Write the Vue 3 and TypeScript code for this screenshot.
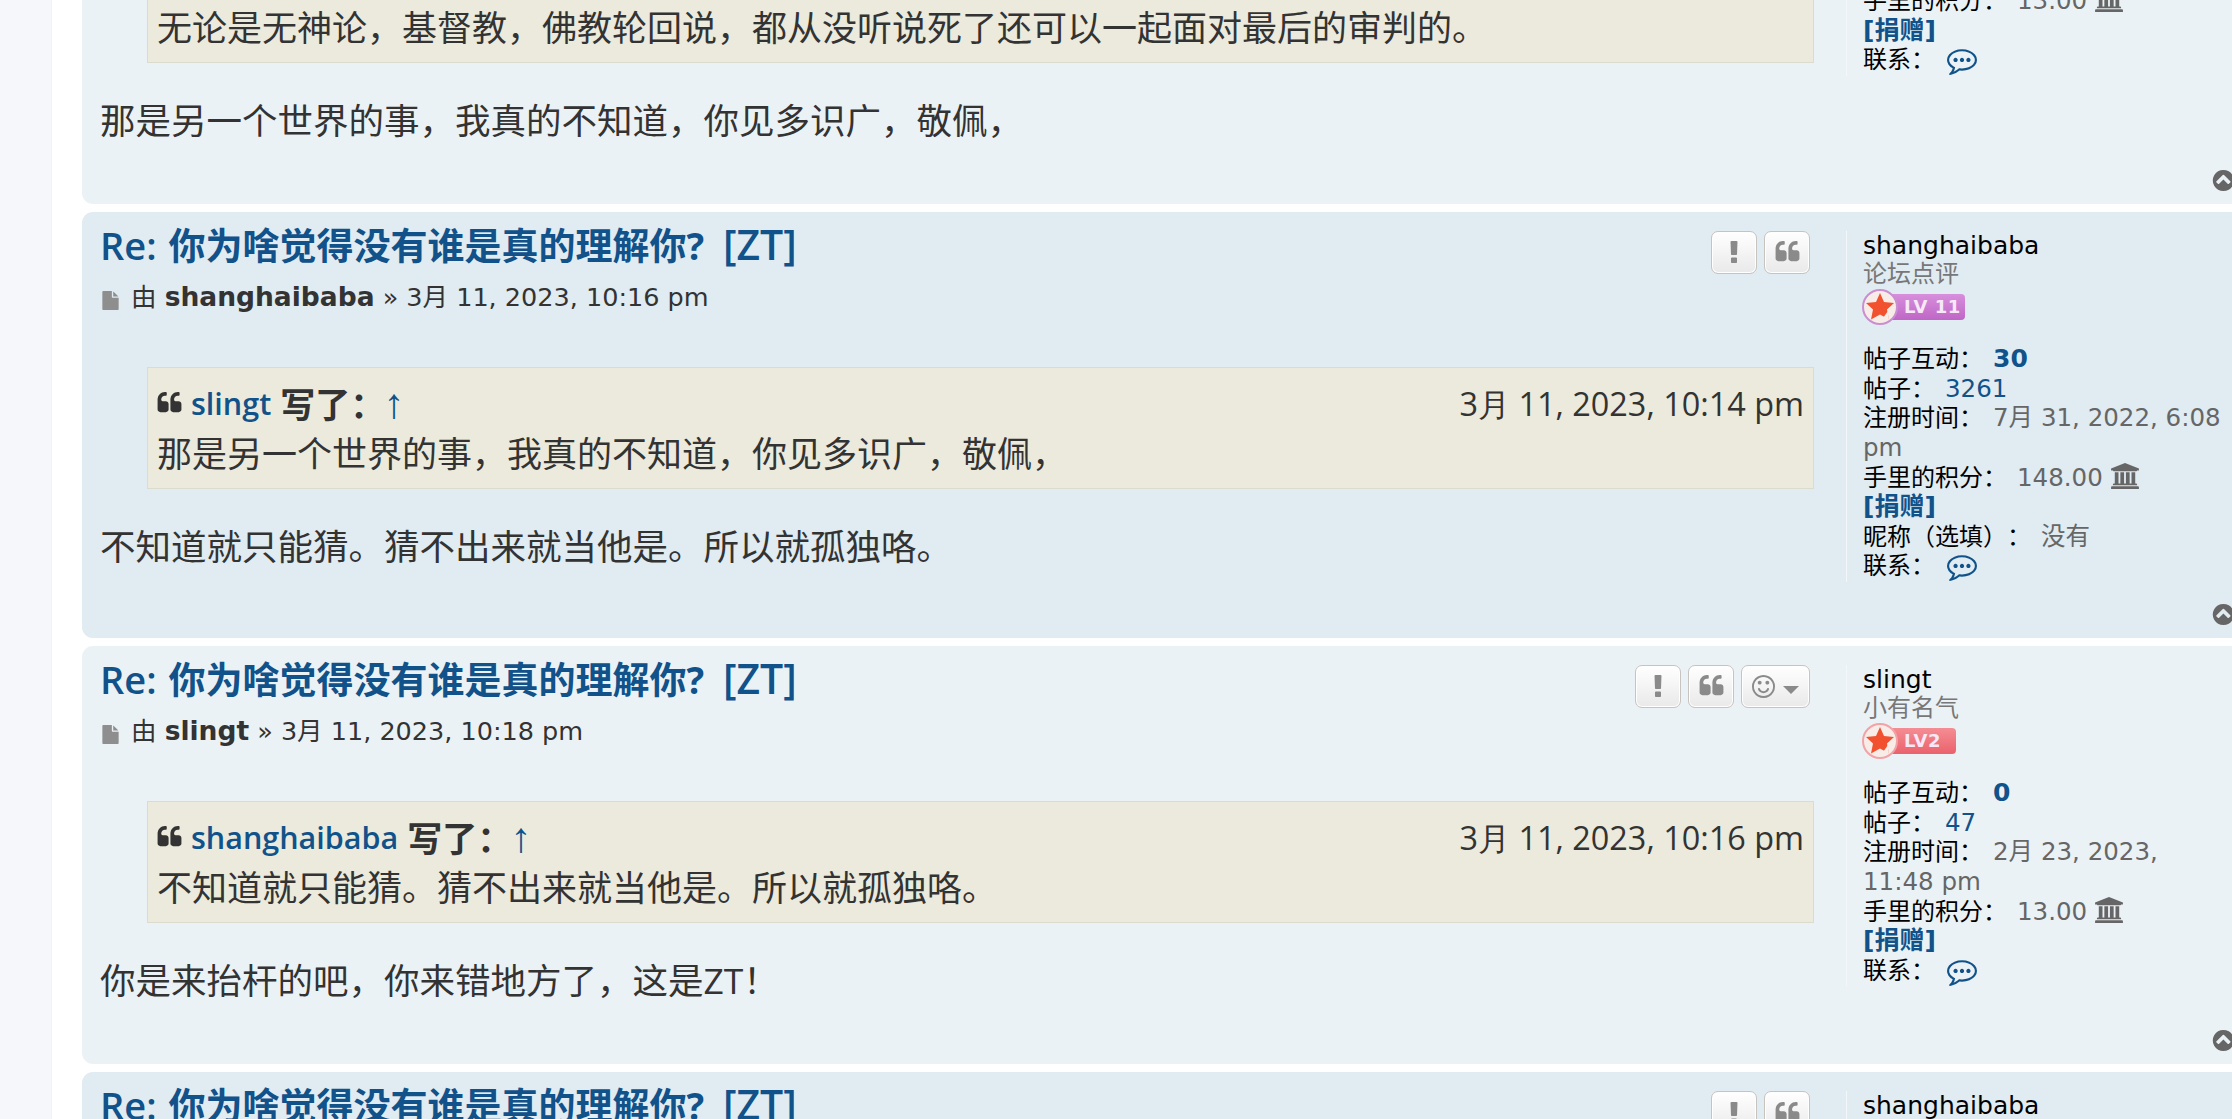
<script setup lang="ts">
interface Post {
  tone: string
  author: string
  time: string
  quoteAuthor: string
  quoteTime: string
  quoteLines: string[]
  text: string
  react: boolean
  rank: string
  level: string
  levelWidth: number
  levelColor: string
  levelLight: string
  ringColor: string
  reputation: string
  posts: string
  joined: string
  points: string
  nickname: boolean
}

const slingt = {
  author: 'slingt',
  rank: '小有名气',
  level: 'LV2',
  levelWidth: 94,
  levelColor: '#ea626c',
  levelLight: '#f58d94',
  ringColor: '#f3a3a6',
  reputation: '0',
  posts: '47',
  joined: '2月 23, 2023, 11:48 pm',
  points: '13.00',
  nickname: false,
}
const baba = {
  author: 'shanghaibaba',
  rank: '论坛点评',
  level: 'LV 11',
  levelWidth: 103,
  levelColor: '#bf66c6',
  levelLight: '#d78fdc',
  ringColor: '#c98fd0',
  reputation: '30',
  posts: '3261',
  joined: '7月 31, 2022, 6:08 pm',
  points: '148.00',
  nickname: true,
}

const title = '你为啥觉得没有谁是真的理解你?'

const posts: Post[] = [
  {
    ...slingt,
    tone: 'light',
    time: '3月 11, 2023, 10:14 pm',
    quoteAuthor: 'shanghaibaba',
    quoteTime: '3月 11, 2023, 10:12 pm',
    quoteLines: ['我们都不可能一起面对最后的审判。', '无论是无神论，基督教，佛教轮回说，都从没听说死了还可以一起面对最后的审判的。'],
    text: '那是另一个世界的事，我真的不知道，你见多识广，敬佩，',
    react: true,
  },
  {
    ...baba,
    tone: 'dark',
    time: '3月 11, 2023, 10:16 pm',
    quoteAuthor: 'slingt',
    quoteTime: '3月 11, 2023, 10:14 pm',
    quoteLines: ['那是另一个世界的事，我真的不知道，你见多识广，敬佩，'],
    text: '不知道就只能猜。猜不出来就当他是。所以就孤独咯。',
    react: false,
  },
  {
    ...slingt,
    tone: 'light',
    time: '3月 11, 2023, 10:18 pm',
    quoteAuthor: 'shanghaibaba',
    quoteTime: '3月 11, 2023, 10:16 pm',
    quoteLines: ['不知道就只能猜。猜不出来就当他是。所以就孤独咯。'],
    text: '你是来抬杆的吧，你来错地方了，这是ZT！',
    react: true,
  },
  {
    ...baba,
    tone: 'dark',
    time: '3月 11, 2023, 10:20 pm',
    quoteAuthor: 'slingt',
    quoteTime: '3月 11, 2023, 10:18 pm',
    quoteLines: ['你是来抬杆的吧，你来错地方了，这是ZT！'],
    text: '',
    react: false,
  },
]

const quotePath =
  'M768 960v384q0 80-56 136t-136 56h-384q-80 0-136-56t-56-136v-704q0-104 40.5-198.5t109.5-163.5 163.5-109.5 198.5-40.5h64q26 0 45 19t19 45v128q0 26-19 45t-45 19h-64q-106 0-181 75t-75 181v32q0 40 28 68t68 28h224q80 0 136 56t56 136zm896 0v384q0 80-56 136t-136 56h-384q-80 0-136-56t-56-136v-704q0-104 40.5-198.5t109.5-163.5 163.5-109.5 198.5-40.5h64q26 0 45 19t19 45v128q0 26-19 45t-45 19h-64q-106 0-181 75t-75 181v32q0 40 28 68t68 28h224q80 0 136 56t56 136z'
</script>

<template>
  <div class="page">
    <aside class="rail"></aside>
    <main class="thread">
      <article v-for="(p, i) in posts" :key="i" class="post" :class="p.tone">
        <div class="inner">
          <section class="body">
            <header class="head">
              <div class="heading">
                <h3 class="title">Re: <b>{{ title }}</b> <span class="tag">[ZT]</span></h3>
                <p class="meta">
                  <svg class="file" viewBox="0 0 1536 1792"><path d="M1024 512v-472q22 14 36 28l408 408q14 14 28 36h-472zm-128 32q0 40 28 68t68 28h544v1056q0 40-28 68t-68 28h-1344q-40 0-68-28t-28-68v-1600q0-40 28-68t68-28h800v544z" /></svg>
                  <span>由</span> <strong>{{ p.author }}</strong> » {{ p.time }}
                </p>
              </div>
              <div class="actions">
                <button class="btn" type="button">
                  <svg class="ic-ex" viewBox="576 128 640 1408"><path d="M1088 1248v224q0 26-19 45t-45 19h-256q-26 0-45-19t-19-45v-224q0-26 19-45t45-19h256q26 0 45 19t19 45zm30-1056l-28 768q-1 26-20.5 45t-45.5 19h-256q-26 0-45.5-19t-20.5-45l-28-768q-1-26 17.5-45t44.5-19h320q26 0 44.5 19t17.5 45z" /></svg>
                </button>
                <button class="btn" type="button">
                  <svg class="ic-q" viewBox="0 128 1664 1536"><path :d="quotePath" /></svg>
                </button>
                <button v-if="p.react" class="btn wide" type="button">
                  <svg class="ic-smile" viewBox="0 128 1536 1536"><path d="M1134 1075q-37 121-138 195t-228 74-228-74-138-195q-8-25 4-48.5t38-31.5q25-8 48.5 4t31.5 38q25 80 92.5 129.5t151.5 49.5 151.5-49.5 92.5-129.5q8-26 32-38t49-4 37 31.5 4 48.5zm-494-435q0 53-37.5 90.5t-90.5 37.5-90.5-37.5-37.5-90.5 37.5-90.5 90.5-37.5 90.5 37.5 37.5 90.5zm512 0q0 53-37.5 90.5t-90.5 37.5-90.5-37.5-37.5-90.5 37.5-90.5 90.5-37.5 90.5 37.5 37.5 90.5zm256 256q0-130-51-248.5t-136.5-204-204-136.5-248.5-51-248.5 51-204 136.5-136.5 204-51 248.5 51 248.5 136.5 204 204 136.5 248.5 51 248.5-51 204-136.5 136.5-204 51-248.5zm128 0q0 209-103 385.5t-279.5 279.5-385.5 103-385.5-103-279.5-279.5-103-385.5 103-385.5 279.5-279.5 385.5-103 385.5 103 279.5 279.5 103 385.5z" /></svg>
                  <i class="caret"></i>
                </button>
              </div>
            </header>

            <blockquote class="quote">
              <div class="quote-head">
                <span class="cite">
                  <svg class="ic-cite" viewBox="0 128 1664 1536"><path :d="quotePath" /></svg>
                  <a class="cite-name">{{ p.quoteAuthor }}</a>
                  <strong class="wrote">写了：</strong>
                  <a class="arrow">↑</a>
                </span>
                <span class="quote-time">{{ p.quoteTime }}</span>
              </div>
              <div v-for="(line, j) in p.quoteLines" :key="j">{{ line }}</div>
            </blockquote>

            <p class="content">{{ p.text }}</p>
          </section>

          <aside class="profile">
            <div class="name">{{ p.author }}</div>
            <div class="rank">{{ p.rank }}</div>
            <svg class="badge" :width="p.levelWidth" height="36" :viewBox="`0 0 ${p.levelWidth} 36`">
              <defs>
                <linearGradient :id="`bar${i}`" x1="0" y1="0" x2="0" y2="1">
                  <stop offset="0" :stop-color="p.levelLight" />
                  <stop offset="1" :stop-color="p.levelColor" />
                </linearGradient>
              </defs>
              <rect x="16" y="5" :width="p.levelWidth - 16" height="26" rx="4" :fill="`url(#bar${i})`" />
              <circle cx="18" cy="18" r="17" fill="#f8ece8" :stroke="p.ringColor" stroke-width="2" />
              <path d="M18 4l4 9 10 1-7 6.500 2 10-9-5-9 5 2-10-7-6.500 10-1z" fill="#f2512f" />
              <path d="M21 29l5-7 1 9z" fill="#f8ece8" />
              <text x="42" y="24" class="badge-text">{{ p.level }}</text>
            </svg>
            <div class="row"><span class="label">帖子互动：</span><a class="rep">{{ p.reputation }}</a></div>
            <div class="row"><span class="label">帖子：</span><a class="count">{{ p.posts }}</a></div>
            <div class="row"><span class="label">注册时间：</span><span class="value">{{ p.joined }}</span></div>
            <div class="row">
              <span class="label">手里的积分：</span><span class="value">{{ p.points }}</span>
              <svg class="bank" viewBox="0 0 1920 1792"><path d="M960 0l960 384v128h-128q0 26-20.500 45t-48.500 19h-1526q-28 0-48.500-19t-20.500-45h-128v-128zm-704 640h256v768h128v-768h256v768h128v-768h256v768h128v-768h256v768h59q28 0 48.500 19t20.500 45v64h-1664v-64q0-26 20.500-45t48.500-19h59v-768zm1595 960q28 0 48.500 19t20.500 45v128h-1920v-128q0-26 20.500-45t48.500-19h1782z" /></svg>
            </div>
            <div class="row"><a class="donate">[捐赠]</a></div>
            <div v-if="p.nickname" class="row"><span class="label">昵称（选填）：</span><span class="value">没有</span></div>
            <div class="row contact">
              <span class="label">联系：</span>
              <svg class="chat" viewBox="0 128 1792 1664"><path d="M640 896q0 53-37.500 90.500t-90.500 37.500-90.500-37.500-37.500-90.500 37.500-90.500 90.500-37.500 90.500 37.500 37.500 90.500zm384 0q0 53-37.500 90.500t-90.500 37.500-90.500-37.500-37.500-90.500 37.500-90.500 90.500-37.500 90.500 37.500 37.500 90.500zm384 0q0 53-37.500 90.500t-90.500 37.500-90.500-37.500-37.500-90.500 37.500-90.500 90.500-37.500 90.500 37.500 37.500 90.500zm-512-512q-204 0-381.500 69.500t-282 187.500-104.500 255q0 112 71.500 213.500t201.500 175.500l87 50-27 96q-24 91-70 172 152-63 275-171l43-38 57 6q69 8 130 8 204 0 381.500-69.500t282-187.500 104.500-255-104.500-255-282-187.500-381.500-69.500zm896 512q0 174-120 321.5t-326 233-450 85.500q-70 0-145-8-198 175-460 242-49 14-114 22h-5q-15 0-27-10.500t-16-27.500v-1q-3-4-.5-12t2-10 4.500-9.500l6-9 7-8.500 8-9q7-8 31-34.500t34.500-38 31-39.500 32.500-51 27-59 26-76q-157-89-247.500-220t-90.500-281q0-174 120-321.5t326-233 450-85.500 450 85.500 326 233 120 321.500z" /></svg>
            </div>
          </aside>
        </div>
        <footer class="foot">
          <svg class="top" viewBox="0 64 1664 1664"><path d="M1293 1139l102-102q19-19 19-45t-19-45l-454-454q-19-19-45-19t-45 19l-454 454q-19 19-19 45t19 45l102 102q19 19 45 19t45-19l307-307 307 307q19 19 45 19t45-19zm371-243q0 209-103 385.500t-279.500 279.500-385.500 103-385.500-103-279.500-279.500-103-385.500 103-385.500 279.500-279.500 385.500-103 385.500 103 279.500 279.500 103 385.500z" /></svg>
        </footer>
      </article>
    </main>
  </div>
</template>

<style>
html,
body {
  margin: 0;
  overflow: hidden;
  background: #fff;
}
</style>

<style scoped>
.page {
  display: flex;
  width: 2232px;
  height: 1119px;
  overflow: hidden;
  background: #fff;
  color: #333;
  font-family: "DejaVu Sans", "Noto Sans CJK SC", sans-serif;
  text-spacing-trim: space-all;
}
.rail {
  flex: 0 0 52px;
  background: #f5f7fb;
  border-right: 1px solid #f0f2f6;
  box-sizing: border-box;
}
.thread {
  flex: 0 0 2162px;
  margin-left: 30px;
  margin-top: -265px;
}
.post {
  box-sizing: border-box;
  margin-bottom: 8px;
  padding: 0 10px 0 18px;
  border-radius: 11px;
}
.light {
  background: #ebf2f6;
}
.dark {
  background: #e0ebf2;
}
.inner {
  display: flex;
  align-items: flex-start;
}
.body {
  box-sizing: border-box;
  flex: 0 0 1746px;
  padding: 11px 32px 3px 0;
}
.head {
  display: flex;
  justify-content: space-between;
}
.title {
  margin: 0;
  color: #105289;
  font: 600 38px/44px "Open Sans", "Noto Sans CJK SC", sans-serif;
  word-spacing: 2px;
}
.title b {
  font-weight: 700;
  font-size: 37px;
}
.tag {
  margin-left: 7px;
  font-size: 41px;
  font-weight: 600;
  line-height: 1;
}
.meta {
  margin: 13px 0 0;
  font-size: 25.500px;
  line-height: 32px;
}
.file {
  width: 17px;
  height: 19px;
  margin: 0 12px 0 2px;
  vertical-align: -4px;
  fill: #8e8e8e;
}
.meta strong {
  font-weight: 700;
  font-size: 26.500px;
}
.actions {
  display: flex;
  gap: 7px;
  margin: 8px 4px 0 0;
}
.btn {
  box-sizing: border-box;
  display: flex;
  align-items: center;
  justify-content: center;
  width: 46px;
  height: 43px;
  padding: 0;
  border: 1px solid #c7c3bf;
  border-radius: 7px;
  background: linear-gradient(#fff, #e9e9e9);
  box-shadow: inset 0 0 0 1px #fff;
}
.btn svg {
  fill: #8a8a8a;
}
.wide {
  width: 69px;
  gap: 8px;
}
.ic-ex {
  width: 14px;
  height: 22px;
}
.ic-q {
  width: 25px;
  height: 22px;
}
.ic-smile {
  width: 23px;
  height: 23px;
}
.caret {
  width: 0;
  height: 0;
  margin-top: 8px;
  border-left: 8px solid transparent;
  border-right: 8px solid transparent;
  border-top: 8px solid #8a8a8a;
}
.quote {
  box-sizing: border-box;
  margin: 54.500px 0 0 47px;
  padding: 10px 9px 11px;
  border: 1px solid #dbdbce;
  background: #ebeadd;
  font: 400 35px/50px "Noto Sans CJK SC", sans-serif;
}
.quote-head {
  display: flex;
  justify-content: space-between;
  height: 49px;
}
.cite {
  display: flex;
  align-items: center;
}
.ic-cite {
  width: 25px;
  height: 22px;
  margin-right: 9px;
  fill: #333;
}
.cite-name {
  color: #105289;
  font: 600 30.500px/50px "Open Sans", sans-serif;
}
.wrote {
  margin-left: 9px;
  font-weight: 700;
}
.arrow {
  margin: 3px 0 0 -2px;
  color: #105289;
  font: 400 42px/50px "Liberation Sans", sans-serif;
}
.quote-time {
  font: 400 32.400px/50px "Open Sans", sans-serif;
}
.content {
  margin: 32px 0 0;
  font: 400 35.500px/50px "Open Sans", "Noto Sans CJK SC", sans-serif;
  min-height: 50px;
}
.profile {
  box-sizing: border-box;
  flex: 0 0 388px;
  margin-top: 19px;
  padding: 0 6px 0 16px;
  border-left: 1px solid #f3f7fa;
  font-size: 24px;
  line-height: 29.400px;
  color: #000;
}
.name {
  font-size: 25px;
}
.rank {
  color: #777;
}
.badge {
  display: block;
  margin: 0 0 20px -1px;
}
.badge-text {
  fill: #f6e8f6;
  font: 700 18px "DejaVu Sans", sans-serif;
  letter-spacing: 0.5px;
}
.label {
  margin-right: 10px;
}
.rep,
.count,
.value,
.donate {
  line-height: 1;
}
.rep {
  color: #105289;
  font-weight: 700;
  font-size: 25px;
}
.count {
  color: #105289;
  font-size: 24.500px;
}
.value {
  color: #666;
  font-size: 24.500px;
}
.bank {
  width: 28px;
  height: 26px;
  margin-left: 8px;
  vertical-align: -3px;
  fill: #666;
}
.donate {
  color: #105289;
  font-weight: 700;
  font-size: 25px;
}
.chat {
  width: 30px;
  height: 28px;
  margin: -4px 0 -4px 2px;
  vertical-align: -3px;
  fill: #105289;
}
.foot {
  display: flex;
  justify-content: flex-end;
  padding: 21px 0 12px;
}
.top {
  display: block;
  width: 23px;
  height: 23px;
  fill: #666;
}
</style>
